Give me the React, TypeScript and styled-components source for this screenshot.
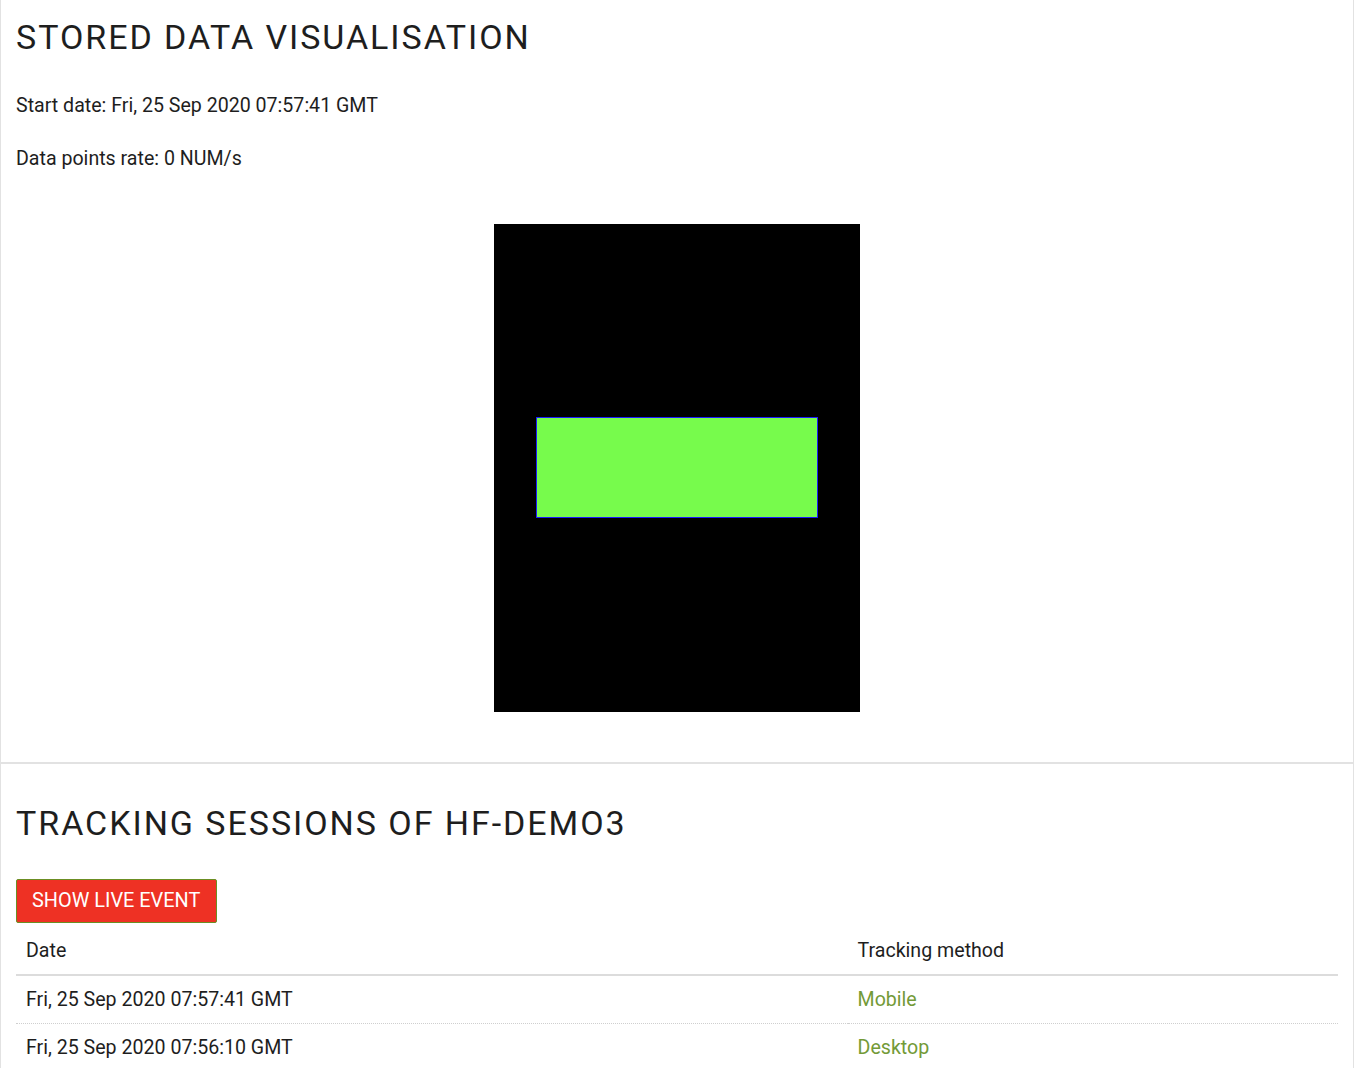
import React from "react";
import styled, { createGlobalStyle } from "styled-components";

const Global = createGlobalStyle`
  html, body { margin: 0; padding: 0; background: #fff; }
  body { font-family: Roboto, "Liberation Sans", sans-serif; color: #212121; }
`;

const Page = styled.div`
  display: flex;
  flex-direction: column;
`;

const Card = styled.section<{ $first?: boolean }>`
  display: flex;
  flex-direction: column;
  border: 1px solid #e2e2e2;
  border-top: ${(p) => (p.$first ? "none" : "1px solid #e2e2e2")};
  padding: 0 15px;
  background: #fff;
`;

const Title = styled.h1<{ $top: number; $bottom: number }>`
  margin: ${(p) => p.$top}px 0 ${(p) => p.$bottom}px;
  font-size: 34px;
  font-weight: 400;
  line-height: 1.2;
  letter-spacing: 1.95px;
  text-transform: uppercase;
  color: #1e1e1e;
`;

const Info = styled.p<{ $gap?: number }>`
  margin: 0 0 ${(p) => (p.$gap ?? 26)}px;
  font-size: 19.6px;
  line-height: 27px;
  color: #1e1e1e;
`;

const CanvasWrap = styled.div`
  display: flex;
  justify-content: center;
  padding: 0 0 50px;
`;

const Button = styled.button`
  align-self: flex-start;
  height: 44px;
  padding: 0 16px 0 15px;
  background: #ee3124;
  color: #fff;
  border: 1px solid #6b8e23;
  border-radius: 2px;
  font-family: Roboto, "Liberation Sans", sans-serif;
  font-size: 19.9px;
  text-transform: uppercase;
  cursor: pointer;
`;

const Table = styled.table`
  width: 100%;
  border-collapse: collapse;
  margin-top: 4px;
  font-size: 19.6px;
  line-height: 27px;
`;

const Th = styled.th<{ $w?: string }>`
  text-align: left;
  font-weight: 400;
  padding: 10px 10px;
  border-bottom: 2px solid #dcdcdc;
  width: ${(p) => p.$w || "auto"};
  color: #1e1e1e;
`;

const Td = styled.td<{ $accent?: boolean; $last?: boolean }>`
  padding: 10px 10px;
  border-bottom: ${(p) => (p.$last ? "none" : "1px dotted #cfcfcf")};
  color: ${(p) => (p.$accent ? "#739a37" : "#1e1e1e")};
`;

const sessions = [
  { date: "Fri, 25 Sep 2020 07:57:41 GMT", method: "Mobile" },
  { date: "Fri, 25 Sep 2020 07:56:10 GMT", method: "Desktop" },
];

export default function App() {
  return (
    <Page>
      <Global />
      <Card $first>
        <Title $top={17} $bottom={34}>Stored data visualisation</Title>
        <Info>Start date: Fri, 25 Sep 2020 07:57:41 GMT</Info>
        <Info $gap={52}>Data points rate: 0 NUM/s</Info>
        <CanvasWrap>
          <svg width="366" height="488" viewBox="0 0 366 488" shapeRendering="crispEdges">
            <rect x="0" y="0" width="366" height="488" fill="#000" />
            <rect x="42" y="193" width="282" height="101" fill="#1a1aff" />
            <rect x="43" y="194" width="280" height="99" fill="#77fb4c" />
          </svg>
        </CanvasWrap>
      </Card>
      <Card>
        <Title $top={39} $bottom={35}>Tracking sessions of HF-DEMO3</Title>
        <Button>Show live event</Button>
        <Table>
          <thead>
            <tr>
              <Th $w="62.9%">Date</Th>
              <Th>Tracking method</Th>
            </tr>
          </thead>
          <tbody>
            {sessions.map((s, i) => (
              <tr key={s.date}>
                <Td $last={i === sessions.length - 1}>{s.date}</Td>
                <Td $accent $last={i === sessions.length - 1}>{s.method}</Td>
              </tr>
            ))}
          </tbody>
        </Table>
      </Card>
    </Page>
  );
}
